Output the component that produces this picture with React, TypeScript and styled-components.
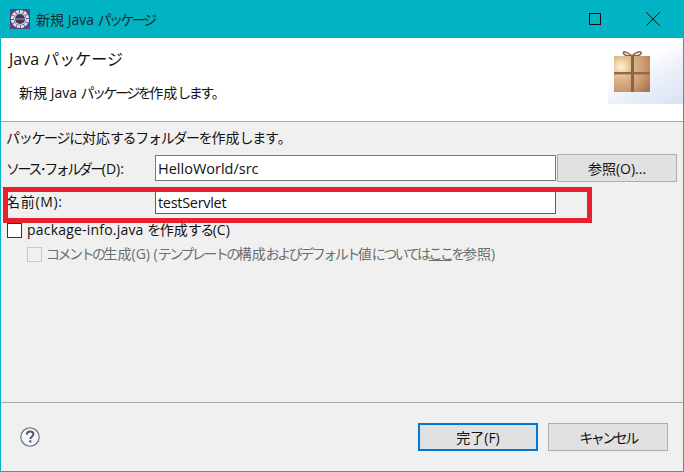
import React from "react";
import styled, { createGlobalStyle } from "styled-components";
import { Minus, X } from "lucide-react";

// the reference font sets kana narrower than kanji
const Jp = ({ text }: { text: string }) => (
  <>
    {text.split(/([\u3040-\u30ff･]+)/).map((part, i) =>
      i % 2 === 1 ? <Kana key={i}>{part}</Kana> : part
    )}
  </>
);

const App = () => {
  return (
    <Dialog>
      <GlobalStyle />
      <TitleBar>
        <AppIcon />
        <WindowTitle>
          <Jp text="新規 Java パッケージ" />
        </WindowTitle>
        <WindowButtons>
          <WindowButton>
            <Minus size={22} strokeWidth={0.9} color="#3c9aa5" />
          </WindowButton>
          <WindowButton>
            <svg width="12" height="12" viewBox="0 0 12 12">
              <rect x="0.5" y="0.5" width="11" height="11" fill="none" stroke="#111" />
            </svg>
          </WindowButton>
          <WindowButton>
            <X size={26} strokeWidth={0.9} color="#111" />
          </WindowButton>
        </WindowButtons>
      </TitleBar>
      <Header>
        <HeaderText>
          <HeaderTitle>Java パッケージ</HeaderTitle>
          <HeaderDesc>
            <Jp text="新規 Java パッケージを作成します。" />
          </HeaderDesc>
        </HeaderText>
        <Banner>
          <GiftIcon />
        </Banner>
      </Header>
      <Body>
        <Description>
          <Jp text="パッケージに対応するフォルダーを作成します。" />
        </Description>
        <FormRow>
          <FieldLabel>
            <Jp text="ソース･フォルダー(D):" />
          </FieldLabel>
          <TextField>HelloWorld/src</TextField>
          <BrowseButton>参照(O)...</BrowseButton>
        </FormRow>
        <NameRow>
          <NameLabel>名前(M):</NameLabel>
          <TextField $focused>testServlet</TextField>
        </NameRow>
        <CheckRow>
          <CheckBox />
          <span>
            <FileName>package-info.java</FileName> <Jp text="を作成する(C)" />
          </span>
        </CheckRow>
        <SubCheckRow>
          <CheckBox $disabled />
          <span>
            <Jp text="コメントの生成(G) (テンプレートの構成およびデフォルト値については" />
            <u>
              <Jp text="ここ" />
            </u>
            <Jp text="を参照)" />
          </span>
        </SubCheckRow>
        <Highlight />
      </Body>
      <Footer>
        <HelpIcon />
        <FooterButtons>
          <PushButton $primary>完了(F)</PushButton>
          <PushButton>
            <Jp text="キャンセル" />
          </PushButton>
        </FooterButtons>
      </Footer>
    </Dialog>
  );
};

export default App;

const AppIcon = () => (
  <svg width="20" height="20" viewBox="0 0 20 20">
    <rect width="20" height="20" fill="#4b4a85" />
    <circle cx="10" cy="10" r="7.7" fill="none" stroke="#e2e2e2" strokeWidth="2.8" strokeDasharray="3.2 0.8" />
    <circle cx="10" cy="10" r="6" fill="#d8d8d8" />
    <circle cx="10" cy="10" r="5" fill="#3f3a5c" />
    <rect x="5" y="9.4" width="10" height="1.2" fill="#8d88a8" />
  </svg>
);

const GiftIcon = () => (
  <svg width="37" height="44" viewBox="0 0 37 44">
    <defs>
      <radialGradient id="gift" cx="0.2" cy="0.3" r="0.95">
        <stop offset="0" stopColor="#fff4d2" />
        <stop offset="0.3" stopColor="#e0bd8f" />
        <stop offset="0.75" stopColor="#c8946a" />
        <stop offset="1" stopColor="#ae7650" />
      </radialGradient>
    </defs>
    <path
      d="M18 6 C14 3 10 0.5 9.5 2.5 C9 5 13 6 18 6 C23 6 28 5 27 2.5 C26 0.5 21 3 18 6"
      fill="none"
      stroke="#8a5f50"
      strokeWidth="1.6"
    />
    <rect x="0" y="6" width="36" height="36" fill="url(#gift)" />
    <rect x="17" y="6" width="3" height="36" fill="#8f6146" />
    <rect x="0" y="22" width="36" height="2.4" fill="#93674b" />
  </svg>
);

const HelpIcon = () => (
  <svg width="20" height="20" viewBox="0 0 20 20">
    <circle cx="10" cy="10" r="9.2" fill="#f5f5f7" stroke="#5f6a86" strokeWidth="1.1" />
    <path
      d="M6.8 7.6 C6.9 5.6 8.3 4.6 10.1 4.6 C12 4.6 13.4 5.7 13.4 7.3 C13.4 9.4 10.6 9.6 10.4 12"
      fill="none"
      stroke="#4f5a78"
      strokeWidth="2"
    />
    <rect x="9.2" y="13.3" width="2.2" height="2.2" fill="#4f5a78" />
  </svg>
);

const GlobalStyle = createGlobalStyle`
  html, body {
    margin: 0;
    padding: 0;
    background: #f0f0f0;
  }
  * {
    box-sizing: border-box;
  }
`;

const Kana = styled.span`
  letter-spacing: -2.5px;
`;

const FileName = styled.span`
  letter-spacing: 0.2px;
`;

const Dialog = styled.div`
  position: relative;
  display: flex;
  flex-direction: column;
  width: 684px;
  height: 472px;
  background: #f0f0f0;
  border: 1px solid #00b4c3;
  border-top: 0;
  font-family: "Open Sans", "Noto Sans CJK JP", sans-serif;
  font-size: 14px;
  color: #111;
  overflow: hidden;
`;

const TitleBar = styled.div`
  display: flex;
  align-items: center;
  flex: 0 0 38px;
  margin: 0 -1px;
  padding-left: 10px;
  background: #00b4c3;
`;

const WindowTitle = styled.div`
  margin-left: 6px;
  font-size: 14px;
  color: #1a2a2c;
`;

const WindowButtons = styled.div`
  display: flex;
  margin-left: auto;
  padding-right: 2px;
`;

const WindowButton = styled.div`
  display: flex;
  align-items: center;
  justify-content: center;
  width: 58px;
  height: 38px;
`;

const Header = styled.div`
  display: flex;
  justify-content: space-between;
  flex: 0 0 84px;
  background: #fff;
  border-bottom: 1px solid #a8a8a8;
`;

const HeaderText = styled.div`
  display: flex;
  flex-direction: column;
  padding: 11px 0 0 8px;
`;

const HeaderTitle = styled.div`
  font-size: 16px;
  line-height: 21px;
`;

const HeaderDesc = styled.div`
  margin: 13px 0 0 10px;
  line-height: 20px;
`;

const Banner = styled.div`
  display: flex;
  justify-content: flex-end;
  align-items: flex-start;
  width: 75px;
  height: 66px;
  padding: 12px 32px 0 0;
  background: linear-gradient(150deg, #ffffff 38%, #edf1fa 60%, #d9e1f3 100%);
`;

const Body = styled.div`
  position: relative;
  display: flex;
  flex-direction: column;
  flex: 1;
  padding: 6px 6px 0 5px;
  border-bottom: 1px solid #a8a8a8;
`;

const Description = styled.div`
  height: 20px;
  line-height: 20px;

  ${Kana} {
    letter-spacing: -1.3px;
  }
`;

const FormRow = styled.div`
  display: flex;
  align-items: center;
  height: 28px;
  margin-top: 6px;
`;

const NameRow = styled(FormRow)`
  height: 23px;
  margin-top: 9px;
`;

const FieldLabel = styled.div`
  flex: 0 0 149px;
`;

const NameLabel = styled(FieldLabel)`
  letter-spacing: 0.7px;
  line-height: 20px;
  margin-top: -2px;
`;

const TextField = styled.div<{ $focused?: boolean }>`
  display: flex;
  align-items: center;
  flex: 0 0 401px;
  height: ${(p) => (p.$focused ? "23px" : "26px")};
  padding-left: 2px;
  background: #fff;
  border: 1px solid ${(p) => (p.$focused ? "#0078d7" : "#7a7a7a")};
  font-size: 14.5px;
  letter-spacing: ${(p) => (p.$focused ? "-0.3px" : "0")};
`;

const BrowseButton = styled.div`
  display: flex;
  align-items: center;
  justify-content: center;
  flex: 0 0 120px;
  height: 28px;
  margin-left: 1px;
  background: #e1e1e1;
  border: 1px solid #adadad;
`;

const CheckRow = styled.div`
  display: flex;
  align-items: center;
  gap: 5px;
  height: 20px;
  margin: 6px 0 0 1px;

  span {
    line-height: 20px;
  }

  ${Kana} {
    letter-spacing: -1.5px;
  }
`;

const SubCheckRow = styled(CheckRow)`
  gap: 4px;
  margin: 4px 0 0 21px;
  color: #6d6d6d;

  ${Kana} {
    letter-spacing: -2.5px;
  }
`;

const CheckBox = styled.div<{ $disabled?: boolean }>`
  flex: 0 0 15px;
  height: 15px;
  background: ${(p) => (p.$disabled ? "#f0f0f0" : "#fff")};
  border: 1px solid ${(p) => (p.$disabled ? "#c8c8c8" : "#333")};
`;

const Highlight = styled.div`
  position: absolute;
  left: 2px;
  top: 65px;
  width: 589px;
  height: 36px;
  border: 5px solid #e81f2c;
  pointer-events: none;
`;

const Footer = styled.div`
  display: flex;
  align-items: center;
  justify-content: space-between;
  flex: 0 0 68px;
  padding: 0 15px 0 19px;
`;

const FooterButtons = styled.div`
  display: flex;
  gap: 10px;
`;

const PushButton = styled.div<{ $primary?: boolean }>`
  display: flex;
  align-items: center;
  justify-content: center;
  width: 120px;
  height: 28px;
  background: #e1e1e1;
  border: ${(p) => (p.$primary ? "2px solid #0078d7" : "1px solid #adadad")};
`;
